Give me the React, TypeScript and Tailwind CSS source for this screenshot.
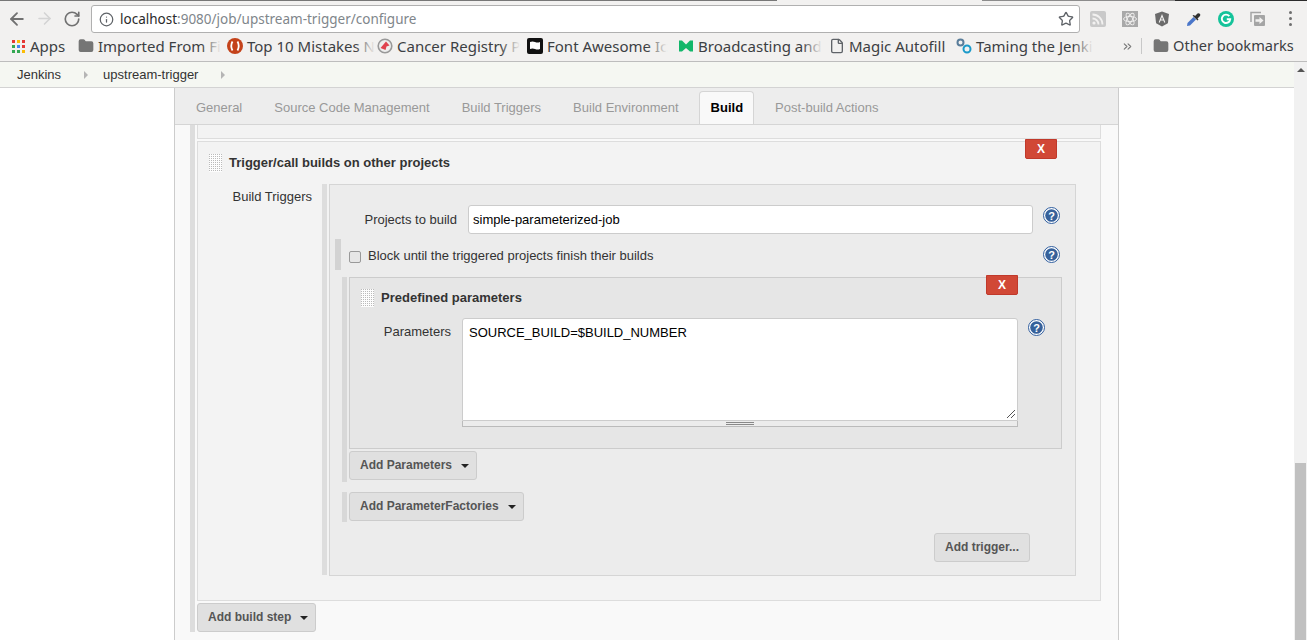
import React from "react";
import { ArrowLeft, ArrowRight, RotateCw, Info, Star, Folder, File, ChevronsRight } from "lucide-react";

const Chrome = "font-['Noto_Sans','Open_Sans',sans-serif]";

const Bookmark = ({
  icon,
  label,
  width,
  fade,
  small,
}: {
  icon: React.ReactNode;
  label: string;
  width: number;
  fade?: boolean;
  small?: boolean;
}) => (
  <div className="flex items-center gap-[4px] shrink-0 overflow-hidden" style={{ width }}>
    <span className="w-4 h-4 shrink-0 flex items-center justify-center">{icon}</span>
    <span className={`relative w-max whitespace-nowrap text-[#3c4043] ${small ? "text-[14.6px]" : "text-[15px]"}`}>
      {label}
      {fade && <span className="absolute right-0 top-0 bottom-0 w-5 bg-gradient-to-r from-transparent to-[#f2f1f0]" />}
    </span>
  </div>
);

const AppsIcon = () => (
  <div className="grid grid-cols-3 gap-[2px]">
    {["bg-[#e53935]", "bg-[#fbbc05]", "bg-[#e53935]", "bg-[#34a853]", "bg-[#4285f4]", "bg-[#e53935]", "bg-[#34a853]", "bg-[#34a853]", "bg-[#fbbc05]"].map((c, i) => (
      <span key={i} className={`w-[3px] h-[3px] ${c}`} />
    ))}
  </div>
);

const BrowserBar = () => (
  <div className={`${Chrome} bg-[#f2f1f0] shrink-0`}>
    <div className="h-[5px] flex items-start">
      <div className="h-px w-[777px] bg-[#777]" />
      <div className="h-px w-[205px] bg-transparent" />
      <div className="h-px w-[193px] bg-[#8c8c8c]" />
      <div className="h-px flex-1 bg-[#2b2b2b]" />
    </div>
    <div className="h-[28px] flex items-start">
      <div className="w-[91px] h-[27px] flex items-center pl-[7px] gap-[9px]">
        <ArrowLeft size={20} strokeWidth={2.2} className="text-[#717171]" />
        <ArrowRight size={19} strokeWidth={2} className="text-[#d4d4d4] -ml-[1px]" />
        <RotateCw size={18} strokeWidth={2.2} className="text-[#717171]" />
      </div>
      <div className="w-[989px] h-[28px] bg-white border border-[#b0b0b0] rounded-[3px] flex items-center pl-[7px] pr-[5px]">
        <Info size={15} className="text-[#5f6368] mr-[6px]" />
        <span className="text-[13.5px] text-[#2b2b2b]">localhost</span>
        <span className="text-[13.5px] text-[#80868b]">:9080/job/upstream-trigger/configure</span>
        <Star size={16} className="text-[#5f6368] ml-auto" />
      </div>
      <div className="flex items-center h-[27px] ml-[10px] gap-[16px]">
        <svg width="16" height="16" viewBox="0 0 16 16">
          <rect width="16" height="16" rx="2" fill="#c9c9c9" />
          <circle cx="4" cy="12" r="1.6" fill="#f2f1f0" />
          <path d="M2.5 7.5a6 6 0 0 1 6 6M2.5 3.5a10 10 0 0 1 10 10" fill="none" stroke="#f2f1f0" strokeWidth="1.8" />
        </svg>
        <svg width="16" height="16" viewBox="0 0 16 16">
          <rect width="16" height="16" fill="#a9a9a9" />
          <g fill="none" stroke="#f2f1f0" strokeWidth="0.9">
            <ellipse cx="8" cy="8" rx="6.5" ry="2.6" />
            <ellipse cx="8" cy="8" rx="6.5" ry="2.6" transform="rotate(60 8 8)" />
            <ellipse cx="8" cy="8" rx="6.5" ry="2.6" transform="rotate(120 8 8)" />
          </g>
        </svg>
        <svg width="16" height="16" viewBox="0 0 16 16">
          <path d="M8 0.5 15 3l-1.1 9.2L8 15.5 2.1 12.2 1 3z" fill="#6b6b6b" />
          <path d="M5.2 11.5 8 4.5l2.8 7M6.2 9h3.6" fill="none" stroke="#f2f1f0" strokeWidth="1.1" />
        </svg>
        <svg width="16" height="16" viewBox="0 0 16 16">
          <path d="M1 15 1.500 12l6-6 2.500 2.500-6 6z" fill="#4a76c9" />
          <path d="M6.500 4.500 11.500 9.500l1-1-1-1 2.500-2.500a1.800 1.800 0 0 0-2.500-2.500L9 5l-1-1z" fill="#303030" />
        </svg>
        <svg width="16" height="16" viewBox="0 0 16 16">
          <circle cx="8" cy="8" r="8" fill="#15c39a" />
          <path d="M11.300 5.200A4.200 4.200 0 1 0 12.200 8.300H8.800" fill="none" stroke="#fff" strokeWidth="1.900" />
        </svg>
        <svg width="16" height="16" viewBox="0 0 16 16">
          <path d="M1 11V1.500h10" fill="none" stroke="#a5a5a5" strokeWidth="1.500" />
          <rect x="4" y="4" width="11" height="11" rx="1" fill="#a5a5a5" />
          <path d="M5.500 8.300h4V6l4 3.500-4 3.500v-2.200h-4z" fill="#f2f1f0" />
        </svg>
        <div className="flex flex-col gap-[3px] ml-[7px]">
          <span className="w-[3px] h-[3px] rounded-full bg-[#6e6e6e]" />
          <span className="w-[3px] h-[3px] rounded-full bg-[#6e6e6e]" />
          <span className="w-[3px] h-[3px] rounded-full bg-[#6e6e6e]" />
        </div>
      </div>
    </div>
    <div className="h-[29px] flex items-center pl-[10px] pb-[2px] border-b border-[#bdbdbd]">
      <Bookmark icon={<AppsIcon />} label="Apps" width={68} />
      <Bookmark icon={<Folder size={16} fill="#757575" className="text-[#757575]" />} label="Imported From Fi" width={149} fade />
      <Bookmark
        icon={
          <svg width="16" height="16" viewBox="0 0 16 16">
            <circle cx="8" cy="8" r="8" fill="#c4421a" />
            <path d="M5.500 3.500Q3 8 5.500 12.500M10.500 3.500Q13 8 10.500 12.500" fill="none" stroke="#fff" strokeWidth="1.800" />
          </svg>
        }
        label="Top 10 Mistakes N"
        width={150}
        fade
      />
      <Bookmark
        icon={
          <svg width="16" height="16" viewBox="0 0 16 16">
            <circle cx="8" cy="8" r="6.800" fill="#eee" stroke="#999" strokeWidth="1.600" />
            <path d="M3.500 10 9 3.500l3.500 4-3 1-1 3.500z" fill="#e0434f" />
          </svg>
        }
        label="Cancer Registry P"
        width={150}
        fade
      />
      <Bookmark
        icon={
          <svg width="16" height="16" viewBox="0 0 16 16">
            <rect width="16" height="16" rx="2" fill="#111" />
            <path d="M3 4q2.500-1 5 0t5 0v7q-2.500 1-5 0t-5 0z" fill="#fff" />
          </svg>
        }
        label="Font Awesome Ic"
        width={151}
        fade
      />
      <Bookmark
        icon={
          <svg width="16" height="16" viewBox="0 0 16 16">
            <path d="M1 2.500h3l4 4 4-4h3v11h-3l-4-3.500-4 3.500H1z" fill="#12b76a" />
          </svg>
        }
        label="Broadcasting and"
        width={151}
        fade
      />
      <Bookmark icon={<File size={16} className="text-[#5f6368]" />} label="Magic Autofill" width={127} />
      <Bookmark
        icon={
          <svg width="16" height="16" viewBox="0 0 16 16">
            <circle cx="4.500" cy="4.500" r="3" fill="none" stroke="#5a7d9a" strokeWidth="2" />
            <circle cx="11" cy="11" r="3.500" fill="none" stroke="#1b9ac9" strokeWidth="2" />
          </svg>
        }
        label="Taming the Jenki"
        width={136}
        fade
      />
      <ChevronsRight size={13} className="text-[#777] ml-[29px]" />
      <div className="w-px h-[16px] bg-[#c8c8c8] ml-[7px] mr-[11px]" />
      <Bookmark icon={<Folder size={16} fill="#757575" className="text-[#757575]" />} label="Other bookmarks" width={141} small />
    </div>
  </div>
);

const Crumb = ({ label }: { label: string }) => (
  <>
    <span className="text-[13px] text-[#333]">{label}</span>
    <span className="ml-[23px] mr-[15px] w-0 h-0 border-y-[4px] border-y-transparent border-l-[4px] border-l-[#b5b5b5]" />
  </>
);

const Tab = ({ label, active }: { label: string; active?: boolean }) =>
  active ? (
    <div className="h-[33px] pl-[11px] pr-[10px] mx-[-1px] flex items-center text-[13px] font-bold text-black bg-[#f9f9f9] border border-b-0 border-[#d5d5d5] rounded-t-[4px]">
      {label}
    </div>
  ) : (
    <div className="h-[33px] px-[21px] flex items-center text-[13px] text-[#999]">{label}</div>
  );

const HelpIcon = () => (
  <svg width="17" height="17" viewBox="0 0 17 17" className="shrink-0">
    <circle cx="8.500" cy="8.500" r="8" fill="#fff" stroke="#2f5d9e" />
    <circle cx="8.500" cy="8.500" r="6.300" fill="#36619b" />
    <text x="8.500" y="12.500" textAnchor="middle" fontSize="11" fontWeight="bold" fill="#fff" fontFamily="Liberation Sans">
      ?
    </text>
  </svg>
);

const Handle = ({ id }: { id: string }) => (
  <svg width="13" height="18" className="shrink-0">
    <defs>
      <pattern id={id} width="2" height="2" patternUnits="userSpaceOnUse">
        <rect width="1" height="1" fill="#bbb" />
      </pattern>
    </defs>
    <rect width="13" height="18" fill="#fdfdfd" />
    <rect width="13" height="18" fill={`url(#${id})`} />
  </svg>
);

const DeleteButton = ({ className }: { className: string }) => (
  <div
    className={`absolute w-[32px] h-[20px] bg-[#d14836] border border-[#c0392b] rounded-b-[2px] text-white text-[12px] font-bold flex items-center justify-center ${className}`}
  >
    X
  </div>
);

const GreyButton = ({ label, menu, className }: { label: string; menu?: boolean; className?: string }) => (
  <div
    className={`h-[29px] pl-[10px] pb-[1px] flex items-center bg-[#e0e0e0] border border-[#ccc] rounded-[3px] text-[12px] font-bold text-[#555] whitespace-nowrap ${menu ? "pr-[7px]" : "pr-[10px]"} ${className ?? ""}`}
  >
    {label}
    {menu && <span className="ml-[9px] mt-[1px] w-0 h-0 border-x-[4px] border-x-transparent border-t-[4px] border-t-[#222]" />}
  </div>
);

const BuildForm = () => (
  <div className="flex-1 min-h-0 overflow-hidden pl-[15px] pr-[17px]">
    <div className="flex gap-[2px]">
      <div className="w-[5px] shrink-0 bg-[#ddd]" />
      <div className="flex-1">
        <div className="h-[14px] bg-[#f3f3f3] border border-t-0 border-[#ddd]" />
        <div className="relative mt-[2px] h-[460px] bg-[#f3f3f3] border border-[#ddd]">
          <DeleteButton className="right-[43px] top-[-3px]" />
          <div className="flex items-center h-[42px] pl-[11px] gap-[7px]">
            <Handle id="handle-outer" />
            <span className="text-[13px] font-bold text-[#333]">Trigger/call builds on other projects</span>
          </div>
          <div className="flex">
            <div className="w-[114px] text-right text-[13px] text-[#333] pt-[3px]">Build Triggers</div>
            <div className="ml-[10px] w-[5px] h-[391px] bg-[#ddd]" />
            <div className="relative ml-[2px] w-[747px] h-[392px] bg-[#ececec] border border-[#d5d5d5]">
              <div className="flex items-center h-[28px] mt-[20px]">
                <div className="w-[127px] pt-[2px] text-right text-[13px] text-[#333]">Projects to build</div>
                <div className="ml-[11px] w-[565px] h-[29px] bg-white border border-[#ccc] rounded-[3px] flex items-center pl-[4px] pt-[1px] text-[13px] text-black">
                  simple-parameterized-job
                </div>
                <div className="ml-[10px] mb-[8px]">
                  <HelpIcon />
                </div>
              </div>
              <div className="flex items-center h-[31px] mt-[6px] ml-[5px]">
                <div className="w-[6px] h-full bg-[#d3d3d3]" />
                <div className="ml-[8px] w-[12px] h-[12px] bg-[#e6e6e6] border border-[#999] rounded-[2px] mt-[5px]" />
                <div className="ml-[7px] pt-[2px] text-[13px] text-[#333]">Block until the triggered projects finish their builds</div>
                <div className="ml-auto mr-[15px]">
                  <HelpIcon />
                </div>
              </div>
              <div className="flex mt-[7px] ml-[12px] mr-[13px]">
                <div className="w-[5px] bg-[#d8d8d8]" />
                <div className="flex-1 ml-[2px] min-w-0">
                  <div className="relative h-[172px] bg-[#e6e6e6] border border-[#ccc]">
                    <DeleteButton className="right-[43px] top-[-3px]" />
                    <div className="flex items-center h-[40px] pl-[11px] gap-[7px]">
                      <Handle id="handle-inner" />
                      <span className="text-[13px] font-bold text-[#333]">Predefined parameters</span>
                    </div>
                    <div className="flex">
                      <div className="w-[101px] text-right text-[13px] text-[#333] pt-[4px]">Parameters</div>
                      <div className="ml-[11px] w-[556px]">
                        <div className="relative h-[103px] bg-white border border-[#ccc] rounded-t-[3px] pl-[6px] pt-[4px] text-[13px] text-black">
                          SOURCE_BUILD=$BUILD_NUMBER
                          <svg width="10" height="10" viewBox="0 0 10 10" className="absolute right-[1px] bottom-[1px]">
                            <path d="M1 9 9 1M5 9l4-4" stroke="#555" strokeWidth="1" />
                          </svg>
                        </div>
                        <div className="h-[6px] bg-[#ececec] border border-t-0 border-[#bbb] flex flex-col items-center justify-center gap-px">
                          <span className="w-[28px] h-px bg-[#888]" />
                          <span className="w-[28px] h-px bg-[#888]" />
                        </div>
                      </div>
                      <div className="ml-[10px] mt-[1px]">
                        <HelpIcon />
                      </div>
                    </div>
                  </div>
                  <GreyButton label="Add Parameters" menu className="w-max mt-[2px] mb-[2px]" />
                </div>
              </div>
              <div className="flex mt-[10px] ml-[12px]">
                <div className="w-[5px] h-[30px] bg-[#d8d8d8]" />
                <GreyButton label="Add ParameterFactories" menu className="ml-[2px]" />
              </div>
              <div className="flex justify-end mt-[11px] mr-[45px]">
                <GreyButton label="Add trigger..." />
              </div>
            </div>
          </div>
        </div>
        <GreyButton label="Add build step" menu className="w-max mt-[2px]" />
      </div>
    </div>
  </div>
);

export default function App() {
  return (
    <div className="h-[640px] overflow-hidden flex flex-col bg-white font-['Liberation_Sans',Arial,sans-serif]">
      <BrowserBar />
      <div className="flex-1 min-h-0 flex">
        <div className="flex-1 min-w-0 flex flex-col">
          <div className="h-[26px] shrink-0 bg-[#f5f7f2] border-b border-[#d3d3d3] flex items-center pl-[17px]">
            <Crumb label="Jenkins" />
            <Crumb label="upstream-trigger" />
          </div>
          <div className="flex-1 min-h-0 ml-[174px] mr-[175px] bg-[#f9f9f9] border-x border-[#ccc] flex flex-col">
            <div className="h-[37px] shrink-0 bg-[#ededed] border-b border-[#d5d5d5] flex items-end">
              <Tab label="General" />
              <div className="-ml-[10px]">
                <Tab label="Source Code Management" />
              </div>
              <div className="-ml-[10px]">
                <Tab label="Build Triggers" />
              </div>
              <div className="-ml-[10px]">
                <Tab label="Build Environment" />
              </div>
              <Tab label="Build" active />
              <div className="ml-[1px]">
                <Tab label="Post-build Actions" />
              </div>
            </div>
            <BuildForm />
          </div>
        </div>
        <div className="w-[13px] shrink-0 bg-[#f1f1f1] flex flex-col items-center">
          <span className="mt-[6px] w-0 h-0 border-x-[4px] border-x-transparent border-b-[4px] border-b-[#555]" />
          <div className="mt-[391px] w-[11px] flex-1 bg-[#c0c0c0]" />
        </div>
      </div>
    </div>
  );
}
